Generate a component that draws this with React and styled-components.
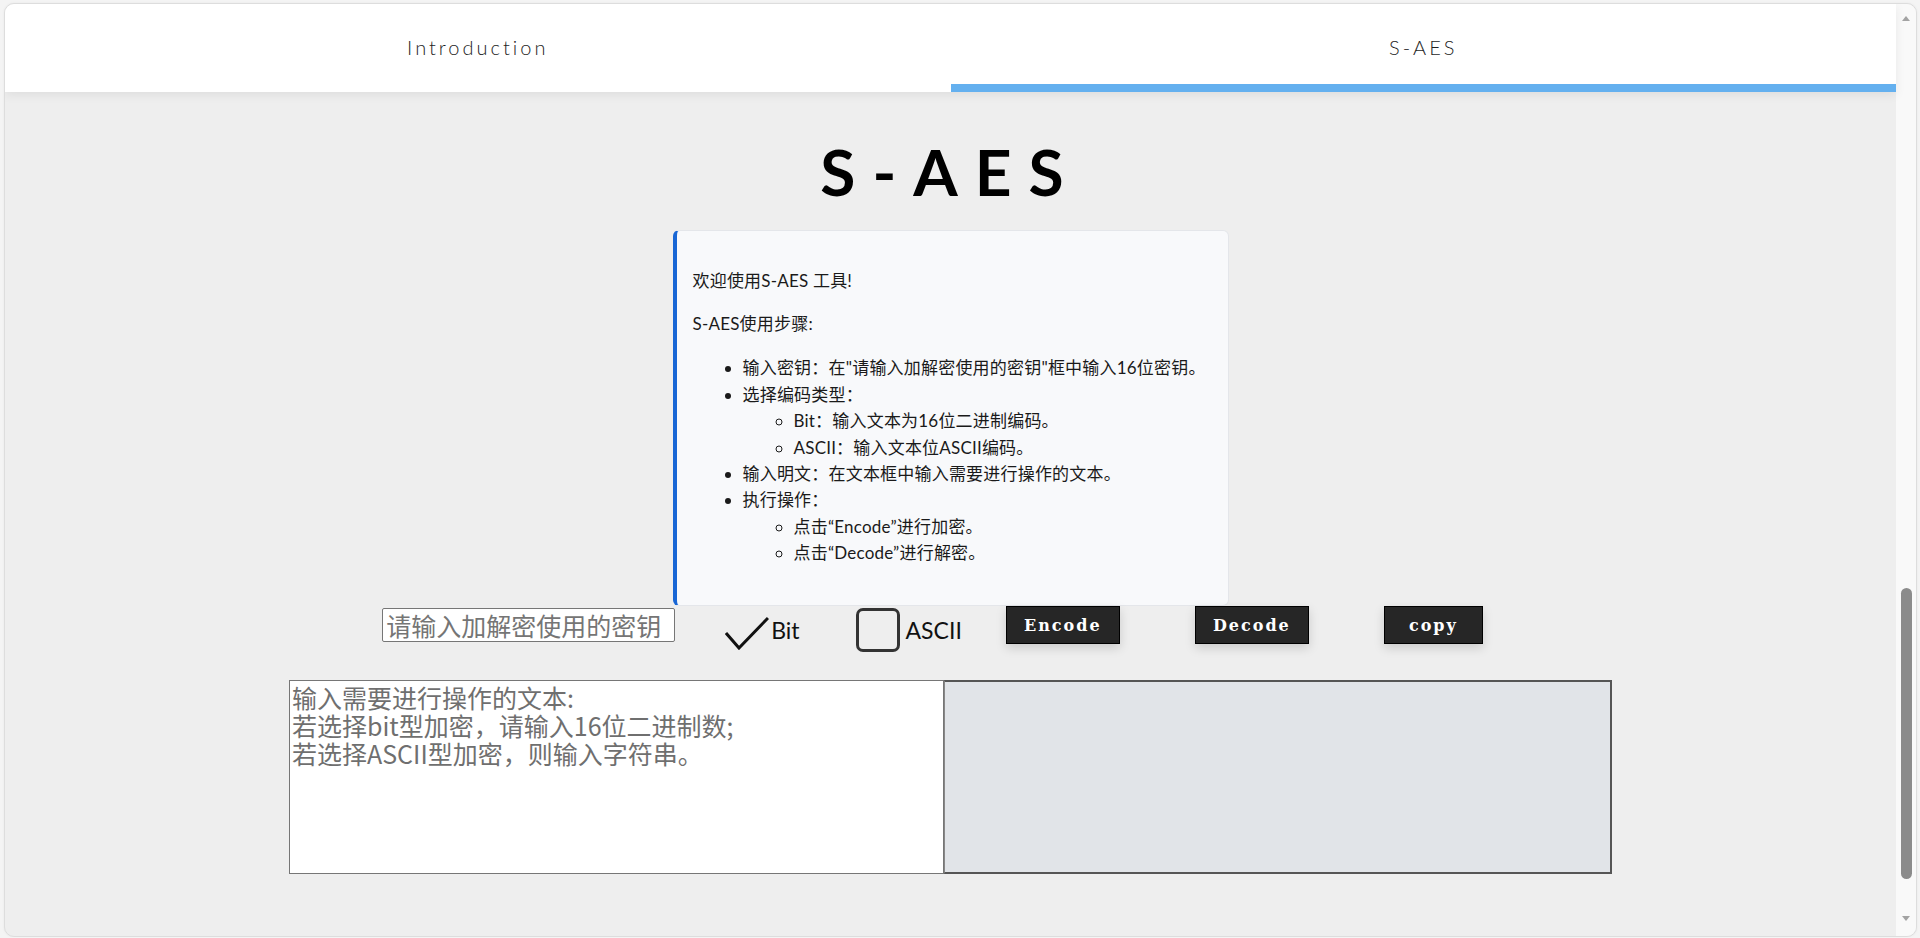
import React, { useState } from 'react';
import styled, { createGlobalStyle } from 'styled-components';

const GlobalStyle = createGlobalStyle`
  html, body {
    margin: 0;
    padding: 0;
    background: #f4f4f4;
    overflow: hidden;
  }
  * { box-sizing: border-box; }
`;

const TEXT_FONT = `Lato, "Noto Sans CJK SC", sans-serif`;

const App = () => {
  const [mode, setMode] = useState('bit');
  const [tab, setTab] = useState(1);

  return (
    <>
      <GlobalStyle />
      <Frame>
        <Main>
          <TabBar>
            <Tab $active={tab === 0} onClick={() => setTab(0)}>Introduction</Tab>
            <Tab $active={tab === 1} onClick={() => setTab(1)}>S-AES</Tab>
          </TabBar>

          <Content>
            <Title>S-AES</Title>

            <InfoCard>
              <p>欢迎使用S-AES 工具!</p>
              <p>S-AES使用步骤:</p>
              <ul>
                <li>输入密钥：在"请输入加解密使用的密钥"框中输入16位密钥。</li>
                <li>
                  选择编码类型：
                  <ul>
                    <li>Bit：输入文本为16位二进制编码。</li>
                    <li>ASCII：输入文本位ASCII编码。</li>
                  </ul>
                </li>
                <li>输入明文：在文本框中输入需要进行操作的文本。</li>
                <li>
                  执行操作：
                  <ul>
                    <li>点击“Encode”进行加密。</li>
                    <li>点击“Decode”进行解密。</li>
                  </ul>
                </li>
              </ul>
            </InfoCard>

            <Controls>
              <KeyInput placeholder="请输入加解密使用的密钥" />
              <CheckLabel $ml={50} onClick={() => setMode('bit')}>
                {mode === 'bit' ? <Tick /> : <Box />}
                <span>Bit</span>
              </CheckLabel>
              <CheckLabel $ml={50} $textGap={6} onClick={() => setMode('ascii')}>
                {mode === 'ascii' ? <Tick /> : <Box />}
                <span>ASCII</span>
              </CheckLabel>
              <ActionButton $ml={44} $w={114}>Encode</ActionButton>
              <ActionButton $ml={75} $w={114}>Decode</ActionButton>
              <ActionButton $ml={75} $w={99}>copy</ActionButton>
            </Controls>

            <TextRow>
              <InputArea
                placeholder={'输入需要进行操作的文本:\n若选择bit型加密，请输入16位二进制数;\n若选择ASCII型加密，则输入字符串。'}
              />
              <OutputArea readOnly />
            </TextRow>
          </Content>
        </Main>

        <Scrollbar>
          <ArrowUp />
          <Thumb />
          <ArrowDown />
        </Scrollbar>
      </Frame>
    </>
  );
};

const Tick = () => (
  <TickSvg viewBox="0 0 44 44" width="44" height="44">
    <polyline points="1,27 14,42 43,12" fill="none" stroke="#111" strokeWidth="3" strokeLinejoin="miter" />
  </TickSvg>
);

// Styled Components
const Frame = styled.div`
  margin: 3px 3px 0 4px;
  height: 934px;
  display: flex;
  border: 1px solid #dddddd;
  border-radius: 10px;
  overflow: hidden;
  background: #eeeeee;
  box-shadow: 0 0 3px rgba(0, 0, 0, 0.05);
`;

const Main = styled.div`
  flex: 1;
  min-width: 0;
  display: flex;
  flex-direction: column;
`;

const TabBar = styled.div`
  display: flex;
  height: 88px;
  background: #ffffff;
  box-shadow: 0 3px 10px rgba(0, 0, 0, 0.07);
  position: relative;
  z-index: 1;
`;

const Tab = styled.div`
  flex: 1;
  display: flex;
  align-items: center;
  justify-content: center;
  padding-bottom: 2px;
  font-family: Lato, sans-serif;
  font-weight: 300;
  font-size: 20px;
  letter-spacing: 3px;
  color: #1e1e1e;
  cursor: pointer;
  box-shadow: ${p => (p.$active ? 'inset 0 -8px 0 #64b0ef' : 'none')};
`;

const Content = styled.div`
  flex: 1;
  display: flex;
  flex-direction: column;
  align-items: center;
`;

const Title = styled.h1`
  margin: 42px 0 20px;
  font-family: Lato, sans-serif;
  font-weight: 700;
  font-size: 64px;
  line-height: 76px;
  letter-spacing: 17px;
  color: #000;
`;

const InfoCard = styled.div`
  width: 556px;
  background: #f8f9fb;
  border: 1px solid #e4e6ea;
  border-left: 4px solid #1866d5;
  border-radius: 6px;
  padding: 19px 16px 21px;
  font-family: ${TEXT_FONT};
  font-size: 17px;
  letter-spacing: 0.2px;
  line-height: 26.4px;
  color: #1a1a1a;

  p {
    margin: 17.5px 0;
  }

  ul {
    margin: 17.5px 0;
    padding-left: 50px;
  }

  ul ul {
    margin: 0;
    padding-left: 51px;
    list-style: circle;
  }
`;

const Controls = styled.div`
  width: 100%;
  height: 44px;
  display: flex;
  align-items: center;
  justify-content: center;
  padding-right: 36px;
`;

const KeyInput = styled.input`
  width: 293px;
  height: 34px;
  margin-bottom: 7px;
  padding: 1px 3px;
  border: 1px solid #767676;
  border-radius: 2px;
  background: #fff;
  font-family: "Noto Sans CJK SC", sans-serif;
  font-size: 25px;
  line-height: 30px;

  &::placeholder {
    color: #757575;
  }
`;

const CheckLabel = styled.label`
  margin-left: ${p => p.$ml}px;
  display: flex;
  align-items: center;
  cursor: pointer;
  font-family: Lato, sans-serif;
  font-size: 23px;
  color: #111;

  span {
    margin-left: ${p => p.$textGap || 2}px;
    margin-top: 4px;
  }
`;

const TickSvg = styled.svg`
  display: block;
`;

const Box = styled.span`
  display: block;
  width: 44px;
  height: 44px;
  border: 3px solid #333;
  border-radius: 7px;
`;

const ActionButton = styled.button`
  margin-left: ${p => p.$ml}px;
  margin-bottom: 6px;
  width: ${p => p.$w}px;
  height: 38px;
  padding: 0;
  background: #262626;
  border: 1px solid #000;
  color: #fff;
  font-family: "DejaVu Serif", serif;
  font-weight: 700;
  font-size: 16px;
  letter-spacing: 2px;
  box-shadow: 0 4px 10px rgba(0, 0, 0, 0.15);
  cursor: pointer;
`;

const TextRow = styled.div`
  margin-top: 30px;
  display: flex;
  justify-content: center;
`;

const InputArea = styled.textarea`
  width: 655px;
  height: 194px;
  margin: 0;
  padding: 2px;
  border: 1px solid #767676;
  background: #fff;
  resize: none;
  font-family: "Noto Sans CJK SC", sans-serif;
  font-size: 25px;
  line-height: 28px;

  &::placeholder {
    color: #6f6f6f;
  }
`;

const OutputArea = styled(InputArea)`
  width: 668px;
  background: #e1e4e8;
  border: 2px solid #555;
  border-left: 1px solid #888;
`;

const Scrollbar = styled.div`
  width: 20px;
  display: flex;
  flex-direction: column;
  align-items: center;
  padding: 12px 0 15px;
  background: #f9f9f9;
`;

const ArrowUp = styled.div`
  width: 0;
  height: 0;
  border-left: 4px solid transparent;
  border-right: 4px solid transparent;
  border-bottom: 5px solid #a3a3a3;
`;

const ArrowDown = styled.div`
  width: 0;
  height: 0;
  border-left: 4px solid transparent;
  border-right: 4px solid transparent;
  border-top: 5px solid #a3a3a3;
`;

const Thumb = styled.div`
  margin-top: auto;
  margin-bottom: 37px;
  width: 11px;
  height: 291px;
  border-radius: 6px;
  background: #8b8b8b;
`;

export default App;
